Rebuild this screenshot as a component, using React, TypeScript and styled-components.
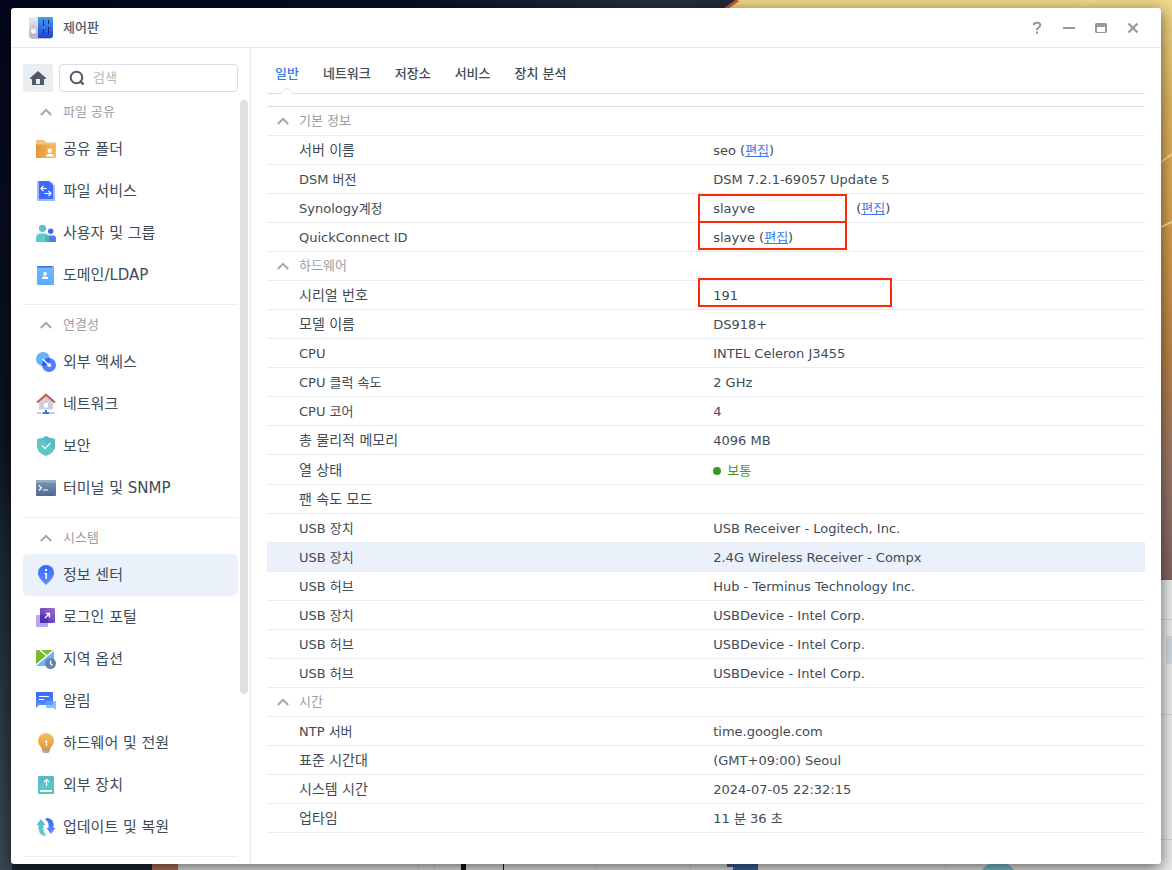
import React, { ReactNode } from 'react';
import styled, { createGlobalStyle, css } from 'styled-components';

const color = {
  text: '#414b55',
  title: '#505a64',
  muted: '#96a0aa',
  heading: '#9b9ea3',
  line: '#e9edf2',
  lineStrong: '#d9dee9',
  frame: '#e4e8f0',
  link: '#3677ea',
  selected: '#ebf1fb',
  mark: '#fa2c0a',
  ok: '#3c9b1e',
};

const GlobalStyle = createGlobalStyle`
  *, *::before, *::after { box-sizing: border-box; }
  body {
    margin: 0;
    color: ${color.text};
    font-family: Verdana, 'DejaVu Sans', 'Noto Sans CJK KR', sans-serif;
    font-size: 13px;
    line-height: 20px;
  }
  button, input { font: inherit; color: inherit; }
  button { padding: 0; border: 0; background: none; cursor: pointer; }
`;

/* ---------- Desktop ---------- */

const Desktop = styled.div`
  position: relative;
  display: flex;
  min-height: 100vh;
  padding: 8px 11px 6px;
  overflow: hidden;
`;

const WallpaperArt = styled.svg`
  position: absolute;
  inset: 0;
  width: 100%;
  height: 100%;
`;

function Wallpaper() {
  return (
    <WallpaperArt viewBox="0 0 1172 870" preserveAspectRatio="none" aria-hidden="true">
      <defs>
        <linearGradient id="night" x1="0" y1="0" x2="1" y2="0">
          <stop offset="0" stopColor="#03071c" />
          <stop offset="0.35" stopColor="#080d22" />
          <stop offset="0.55" stopColor="#272d3b" />
          <stop offset="1" stopColor="#1b2130" />
        </linearGradient>
        <linearGradient id="edge" x1="0" y1="0" x2="0" y2="1">
          <stop offset="0" stopColor="#03071c" />
          <stop offset="0.5" stopColor="#0c1322" />
          <stop offset="0.65" stopColor="#1d2836" />
          <stop offset="1" stopColor="#3a4855" />
        </linearGradient>
        <linearGradient id="gold" x1="0" y1="0" x2="0" y2="1">
          <stop offset="0" stopColor="#efd88a" />
          <stop offset="0.18" stopColor="#dfb660" />
          <stop offset="0.42" stopColor="#d39a4c" />
          <stop offset="0.62" stopColor="#b98248" />
          <stop offset="0.8" stopColor="#9b7767" />
          <stop offset="1" stopColor="#806462" />
        </linearGradient>
      </defs>
      <rect width="1172" height="870" fill="url(#night)" />
      <rect width="14" height="870" fill="url(#edge)" />
      <path d="M738 0H1172V580H1140L724 10Z" fill="url(#gold)" />
      <path d="M738 0L724 10" stroke="#c65a35" strokeWidth="3" />
      <path d="M1070 10L1096 0M1150 170L1172 154M1150 232L1172 222" stroke="#f3dd92" strokeWidth="2" />
      <path d="M12 850H152L160 870H12Z" fill="#1c2733" />
      <path d="M152 850H178V870H152Z" fill="#b8755f" />
      <path d="M178 850H1150V580H1172V870H178Z" fill="#ececec" />
      <path d="M1150 619.500H1172M1150 714.500H1172M1150 839.500H1172" stroke="#d2d3d5" />
      <path d="M418.500 860V870M434.500 860V870M596.500 860V870M690.500 860V870M945.500 860V870" stroke="#dcdcdc" />
      <rect x="1166" y="636" width="12" height="28" rx="3" fill="#d3dbe0" />
      <path d="M461 860H466V870H461ZM503 860H504V870H503Z" fill="#111" />
      <path d="M727 860H758V870H733V867H727Z" fill="#41669a" />
      <circle cx="998" cy="882" r="20" fill="#7dc9d4" />
    </WallpaperArt>
  );
}

/* ---------- Window frame ---------- */

const Window = styled.main`
  position: relative;
  display: flex;
  flex: 1;
  flex-direction: column;
  min-width: 0;
  border-radius: 3px;
  background: #fff;
  box-shadow: 0 4px 16px rgba(0, 0, 0, 0.6);
`;

const TitleBar = styled.header`
  display: flex;
  align-items: center;
  height: 40px;
  padding: 0 12px 0 18px;
  border-bottom: 1px solid ${color.frame};
`;

const Title = styled.h1`
  flex: 1;
  margin: 0 0 0 10px;
  color: ${color.title};
  font-size: 13px;
  font-weight: 500;
`;

const WindowButton = styled.button`
  display: grid;
  place-items: center;
  width: 32px;
  height: 32px;
  color: #939aa1;
`;

const Body = styled.div`
  display: flex;
  flex: 1;
`;

/* ---------- Sidebar ---------- */

const Sidebar = styled.aside`
  display: flex;
  flex: none;
  flex-direction: column;
  width: 240px;
  padding: 16px 2px 0 12px;
  border-right: 1px solid ${color.frame};
`;

const SearchRow = styled.div`
  display: flex;
  gap: 6px;
  padding-right: 10px;
`;

const HomeButton = styled.button`
  display: grid;
  flex: none;
  place-items: center;
  width: 30px;
  height: 28px;
  border-radius: 3px;
  background: #e9eef3;
`;

const SearchField = styled.label`
  display: flex;
  flex: 1;
  align-items: center;
  gap: 8px;
  min-width: 0;
  height: 28px;
  padding: 0 9px;
  border: 1px solid ${color.lineStrong};
  border-radius: 4px;

  svg { flex: none; }
`;

const SearchInput = styled.input`
  flex: 1;
  width: 0;
  min-width: 0;
  padding: 0;
  border: 0;
  outline: 0;
  background: none;
  &::placeholder { color: #b4b8bd; opacity: 1; }
`;

const SidebarScroll = styled.div`
  display: flex;
  flex: 1;
  gap: 2px;
`;

const Nav = styled.nav`
  flex: 1;
  min-width: 0;
`;

const NavGroup = styled.section`
  padding-bottom: 8px;
  border-bottom: 1px solid ${color.line};
`;

const NavHeading = styled.button`
  display: flex;
  align-items: center;
  gap: 11px;
  width: 100%;
  height: 36px;
  padding-top: 3px;
  padding-left: 17px;
  color: ${color.heading};
`;

const NavItem = styled.a<{ $selected?: boolean }>`
  display: flex;
  align-items: center;
  gap: 7px;
  height: 42px;
  padding-left: 13px;
  border-radius: 5px;
  color: ${color.text};
  font-size: 15px;
  text-decoration: none;
  ${(p) => p.$selected && css`background: ${color.selected};`}
`;

const ScrollThumb = styled.div`
  width: 8px;
  height: 77%;
  margin-top: 8px;
  border-radius: 4px;
  background: #e0e0e0;
`;

/* ---------- Content ---------- */

const Content = styled.section`
  flex: 1;
  min-width: 0;
  padding: 0 16px;
`;

const Tabs = styled.div`
  display: flex;
  gap: 24px;
  height: 46px;
  padding-left: 8px;
  border-bottom: 1px solid ${color.lineStrong};
`;

const Tab = styled.button<{ $active?: boolean }>`
  position: relative;
  height: 46px;
  padding-bottom: 4px;
  padding-top: 10px;
  font-weight: 500;
  ${(p) => p.$active && css`color: ${color.link};`}
`;

const TabCaret = styled.svg`
  position: absolute;
  bottom: 0;
  left: calc(50% - 6px);
`;

const InfoTable = styled.table`
  width: 100%;
  margin-top: 12px;
  border-top: 1px solid ${color.lineStrong};
  border-spacing: 0;
  table-layout: fixed;
`;

const LabelColumn = styled.col`
  width: 49%;
`;

const GroupCell = styled.th`
  height: 29px;
  padding: 0;
  border-bottom: 1px solid ${color.line};
  color: ${color.heading};
  font-weight: 400;
`;

const GroupButton = styled.button`
  display: flex;
  align-items: center;
  gap: 10px;
  padding-left: 10px;
`;

const cell = css`
  height: 29px;
  padding-top: 2px;
  padding-bottom: 0;
  border-bottom: 1px solid ${color.line};
  text-align: left;
  font-weight: 400;
`;

const LabelCell = styled.th<{ $hangul: boolean }>`
  ${cell}
  padding-left: 32px;
  ${(p) => p.$hangul && css`
    padding-top: 0;
    font-size: 14px;
  `}
`;

const ValueCell = styled.td`
  ${cell}
  position: relative;
  padding-left: 16px;
`;

const Row = styled.tr<{ $selected?: boolean }>`
  ${(p) => p.$selected && css`background: ${color.selected};`}
`;

const EditLink = styled.a`
  color: ${color.link};
  text-decoration: underline;
`;

const Account = styled.span`
  display: inline-block;
  width: 143px;
`;

const Status = styled.span`
  display: flex;
  align-items: center;
  gap: 6px;
  height: 27px;
  color: ${color.ok};
  &::before {
    content: '';
    width: 8px;
    height: 8px;
    border-radius: 50%;
    background: ${color.ok};
  }
`;

const Mark = styled.span<{ $width: number; $top: number }>`
  position: absolute;
  top: ${(p) => p.$top}px;
  left: 1px;
  width: ${(p) => p.$width}px;
  height: 29px;
  border: 2px solid ${color.mark};
  pointer-events: none;
`;

/* ---------- Icons ---------- */

const Chevron = () => (
  <svg width="12" height="8" viewBox="0 0 12 8" fill="none" stroke="#a3a8ae" strokeWidth="2" aria-hidden="true">
    <path d="M.8 7L6 1.800L11.200 7" />
  </svg>
);

const Icon20 = ({ children }: { children: ReactNode }) => (
  <svg width="20" height="20" viewBox="0 0 20 20" overflow="visible" aria-hidden="true">{children}</svg>
);

const GradientDefs = styled.svg`
  position: absolute;
`;

const IconGradients = () => (
  <GradientDefs width="0" height="0" aria-hidden="true">
    <defs>
      <linearGradient id="orange" x1="0" y1="0" x2="1" y2="0"><stop stopColor="#e8963a" /><stop offset="1" stopColor="#f3be55" /></linearGradient>
      <linearGradient id="blue" x1="0" y1="0" x2="0" y2="1"><stop stopColor="#3467fb" /><stop offset="1" stopColor="#6590fd" /></linearGradient>
      <linearGradient id="sky" x1="0" y1="0" x2="0" y2="1"><stop stopColor="#76b6fb" /><stop offset="1" stopColor="#5aabff" /></linearGradient>
      <linearGradient id="teal" x1="0" y1="0" x2="0" y2="1"><stop stopColor="#55b7cd" /><stop offset="1" stopColor="#67cdc3" /></linearGradient>
      <linearGradient id="steel" x1="0" y1="0" x2="0" y2="1"><stop stopColor="#8097b8" /><stop offset="1" stopColor="#4d6b96" /></linearGradient>
      <linearGradient id="violet" x1="1" y1="0" x2="0" y2="1"><stop stopColor="#a66bd4" /><stop offset="1" stopColor="#4330ab" /></linearGradient>
      <linearGradient id="bulb" x1="0" y1="0" x2="0" y2="1"><stop stopColor="#f0c369" /><stop offset="1" stopColor="#e8932e" /></linearGradient>
      <linearGradient id="panelBlue" x1="0" y1="0" x2="0" y2="1"><stop stopColor="#44a0ea" /><stop offset="1" stopColor="#2740d6" /></linearGradient>
      <linearGradient id="panelGray" x1="0" y1="0" x2="0" y2="1"><stop stopColor="#e9eafa" /><stop offset="1" stopColor="#b4b4c8" /></linearGradient>
    </defs>
  </GradientDefs>
);

const ControlPanelIcon = () => (
  <svg width="24" height="24" viewBox="0 0 24 24" aria-hidden="true">
    <path d="M2 21H22V23H2Z" fill="#c3c3cc" />
    <path d="M1 1H9V22H2Q0 22 0 20V2Q0 1 1 1Z" fill="url(#panelGray)" />
    <path d="M9 1H23Q24 1 24 2V20Q24 22 22 22H9Z" fill="url(#panelBlue)" />
    <circle cx="4.500" cy="15.800" r="3" fill="#9b9fb4" />
    <circle cx="4.500" cy="15.200" r="2.700" fill="#f1f2fa" />
    <circle cx="4.500" cy="10" r=".6" fill="#6d7084" />
    <path d="M14.500 4V18M19.500 4V18" stroke="#122a6b" />
    <circle cx="14.500" cy="11.500" r="1.600" fill="#3c83ee" />
    <circle cx="19.500" cy="9.500" r="1.600" fill="#3c83ee" />
  </svg>
);

const icons = {
  folder: (
    <Icon20>
      <path d="M0 7V2Q0 1 1 1H8L10 3.500H19Q20 3.500 20 4.500V7Z" fill="#f2c083" />
      <path d="M0 5.500H20V18Q20 19 19 19H1Q0 19 0 18Z" fill="url(#orange)" />
      <circle cx="13.700" cy="11.700" r="2.200" fill="#fff" />
      <path d="M10 17.500V16.500Q10 15 12 15H15.500Q17.500 15 17.500 16.500V17.500Z" fill="#fff" />
    </Icon20>
  ),
  fileService: (
    <Icon20>
      <path d="M1 0H13L19 5V20H2Q1 20 1 19Z" fill="#a0b5fc" />
      <path d="M3 0H13L17 4V18H3Z" fill="#3b6bfa" />
      <path d="M13 0L17 4V2Z" fill="#84a2fc" />
      <path d="M10.500 7.500H5M7.500 5L5 7.500L7.500 10M8.500 12.500H15M12.500 10L15 12.500L12.500 15" fill="none" stroke="#fff" strokeWidth="1.200" />
    </Icon20>
  ),
  users: (
    <Icon20>
      <circle cx="14.700" cy="8.300" r="2.700" fill="#3c6dfa" />
      <path d="M11 19V14Q11 12.500 13 12.500H17Q20 12.500 20 15.500V19Z" fill="#4d7bfb" />
      <circle cx="6.500" cy="5.300" r="3.600" fill="#62c1c9" />
      <path d="M0 19V15Q0 10.500 4.500 10.500H8.500Q13 10.500 13 15V19Z" fill="#62c9c6" />
      <path d="M9 19V15Q9 13 13 13V19Z" fill="#4bb1b6" />
    </Icon20>
  ),
  domain: (
    <Icon20>
      <rect x="1" y="1" width="16" height="4" rx="1" fill="#3b6bfa" />
      <path d="M16 1H18V19Q18 20 17 20H2Q1 20 1 19V2.500H16Z" fill="url(#sky)" />
      <circle cx="9" cy="8.800" r="1.900" fill="#fff" />
      <path d="M6 14V13Q6 11.500 8 11.500H10Q12 11.500 12 13V14Z" fill="#fff" />
    </Icon20>
  ),
  external: (
    <Icon20>
      <circle cx="7" cy="7" r="7" fill="#65b1fb" />
      <circle cx="13" cy="13" r="7" fill="#547ffc" />
      <path d="M13.900 6.100A7 7 0 0 0 6.100 13.900A7 7 0 0 0 13.900 6.100Z" fill="#2e62f0" />
      <path d="M6.500 7L13 13" stroke="#fff" strokeWidth="1.300" />
      <circle cx="13.200" cy="13.200" r="1.900" fill="#fff" />
    </Icon20>
  ),
  network: (
    <Icon20>
      <path d="M3 7L10 1L17 7V15.500H3Z" fill="#cfd0d6" />
      <path d="M1 8.500L10 .8L19 8.500" fill="none" stroke="#c8574a" strokeWidth="1.900" />
      <rect x="8" y="9" width="4" height="4.500" rx="1" fill="#fff" />
      <path d="M1 19H19" stroke="#cdd0d8" strokeWidth="2" />
      <path d="M9 16H11V18H13V20H7V18H9Z" fill="#3b6bfa" />
    </Icon20>
  ),
  security: (
    <Icon20>
      <path d="M10 0Q14 3 19 3V10Q19 17 10 20Q1 17 1 10V3Q6 3 10 0Z" fill="#5ec6c4" />
      <path d="M10 0Q14 3 19 3V10Q19 12 18 14L7 3Z" fill="#59b8c5" />
      <path d="M6 9.500L9 12.500L14.500 7" fill="none" stroke="#fff" strokeWidth="1.300" />
    </Icon20>
  ),
  terminal: (
    <Icon20>
      <rect y="2" width="20" height="16" rx="1" fill="url(#steel)" />
      <rect y="2" width="20" height="2.500" fill="#9aabc5" />
      <path d="M3 7.500L5.500 10L3 12.500M7 12H12" fill="none" stroke="#fff" strokeWidth="1.200" />
    </Icon20>
  ),
  info: (
    <Icon20>
      <path d="M10 0A8 8 0 0 1 18 8Q18 12 13.500 16.500L10 20L6.500 16.500Q2 12 2 8A8 8 0 0 1 10 0Z" fill="url(#blue)" />
      <rect x="9" y="4" width="2" height="2" fill="#fff" />
      <path d="M8.500 8H11V14H9.500V9.200H8.500Z" fill="#fff" />
    </Icon20>
  ),
  portal: (
    <Icon20>
      <rect y="8" width="12" height="12" rx="1" fill="#baa5ee" />
      <rect x="4" y="1" width="15" height="15" rx="1" fill="url(#violet)" />
      <path d="M4 8H12V16H5Q4 16 4 15Z" fill="#4a2fa6" opacity=".6" />
      <path d="M9 11L14 6M10 6.500H13.500V10.500" fill="none" stroke="#fff" strokeWidth="1.300" />
    </Icon20>
  ),
  region: (
    <Icon20>
      <rect y="1" width="18" height="16" rx="1" fill="#6bb5fb" />
      <path d="M1 1H17L1 16L0 17V2Z" fill="#7cbc2c" />
      <path d="M0 16L18 1M4 1L11 7" fill="none" stroke="#fff" strokeWidth="1.500" />
      <circle cx="14.500" cy="14.500" r="5.500" fill="#6482b0" />
      <path d="M14.500 11.500V14.500L16.500 16.500" fill="none" stroke="#fff" strokeWidth="1.400" />
    </Icon20>
  ),
  notice: (
    <Icon20>
      <path d="M1 1H16Q17 1 17 2V14H3L0 17V2Q0 1 1 1Z" fill="url(#blue)" />
      <path d="M3 5.500H13M3 8.500H8" stroke="#fff" strokeWidth="1.200" />
      <path d="M10 10H19Q20 10 20 11V19L17.500 17H10Z" fill="#86bffc" />
      <path d="M10 10H17V14H10Z" fill="#5a9dfb" />
    </Icon20>
  ),
  power: (
    <Icon20>
      <path d="M10 0A8 8 0 0 1 18 8Q18 11 15.500 13.500Q14 15 14 17H6Q6 15 4.500 13.500Q2 11 2 8A8 8 0 0 1 10 0Z" fill="url(#bulb)" />
      <path d="M6 17H14V18.500H13L12.500 20H7.500L7 18.500H6Z" fill="#a2a8b5" />
      <path d="M9 8.500L10.500 8.200V13" fill="none" stroke="#fff" strokeWidth="1.300" />
    </Icon20>
  ),
  device: (
    <Icon20>
      <rect x="2" y="1" width="16" height="18" rx="1" fill="url(#teal)" />
      <path d="M2 13H18V18Q18 19 17 19H3Q2 19 2 18Z" fill="#57c4bd" />
      <path d="M10.500 11V4.500M8 7L10.500 4.500L13 7" fill="none" stroke="#fff" strokeWidth="1.200" />
      <path d="M4 16H16" stroke="#fff" strokeWidth="1.800" />
    </Icon20>
  ),
  update: (
    <Icon20>
      <path d="M5 2L9.500 8H7.500Q6.500 14 10 18L9 19Q1.500 18 2.500 8H.500Z" fill="url(#teal)" />
      <path d="M15 17L10.500 11H12.500Q13.500 5 9 2L11 1Q18.500 1 17.500 11H19.500Z" fill="url(#blue)" />
    </Icon20>
  ),
};

/* ---------- Data ---------- */

type NavEntry = { label: string; icon: keyof typeof icons };

const navGroups: { title: string; items: NavEntry[] }[] = [
  {
    title: '파일 공유',
    items: [
      { label: '공유 폴더', icon: 'folder' },
      { label: '파일 서비스', icon: 'fileService' },
      { label: '사용자 및 그룹', icon: 'users' },
      { label: '도메인/LDAP', icon: 'domain' },
    ],
  },
  {
    title: '연결성',
    items: [
      { label: '외부 액세스', icon: 'external' },
      { label: '네트워크', icon: 'network' },
      { label: '보안', icon: 'security' },
      { label: '터미널 및 SNMP', icon: 'terminal' },
    ],
  },
  {
    title: '시스템',
    items: [
      { label: '정보 센터', icon: 'info' },
      { label: '로그인 포털', icon: 'portal' },
      { label: '지역 옵션', icon: 'region' },
      { label: '알림', icon: 'notice' },
      { label: '하드웨어 및 전원', icon: 'power' },
      { label: '외부 장치', icon: 'device' },
      { label: '업데이트 및 복원', icon: 'update' },
    ],
  },
];

const tabs = ['일반', '네트워크', '저장소', '서비스', '장치 분석'];

const Edit = () => (
  <>(<EditLink href="#edit">편집</EditLink>)</>
);

type InfoRow = { label: string; value?: ReactNode; selected?: boolean };

const infoGroups: { title: string; rows: InfoRow[] }[] = [
  {
    title: '기본 정보',
    rows: [
      { label: '서버 이름', value: <>seo <Edit /></> },
      { label: 'DSM 버전', value: 'DSM 7.2.1-69057 Update 5' },
      { label: 'Synology계정', value: <><Account>slayve</Account><Edit /><Mark $width={149} $top={0} /></> },
      { label: 'QuickConnect ID', value: <>slayve <Edit /><Mark $width={149} $top={-2} /></> },
    ],
  },
  {
    title: '하드웨어',
    rows: [
      { label: '시리얼 번호', value: <>191<Mark $width={194} $top={-3} /></> },
      { label: '모델 이름', value: 'DS918+' },
      { label: 'CPU', value: 'INTEL Celeron J3455' },
      { label: 'CPU 클럭 속도', value: '2 GHz' },
      { label: 'CPU 코어', value: '4' },
      { label: '총 물리적 메모리', value: '4096 MB' },
      { label: '열 상태', value: <Status>보통</Status> },
      { label: '팬 속도 모드' },
      { label: 'USB 장치', value: 'USB Receiver - Logitech, Inc.' },
      { label: 'USB 장치', value: '2.4G Wireless Receiver - Compx', selected: true },
      { label: 'USB 허브', value: 'Hub - Terminus Technology Inc.' },
      { label: 'USB 장치', value: 'USBDevice - Intel Corp.' },
      { label: 'USB 허브', value: 'USBDevice - Intel Corp.' },
      { label: 'USB 허브', value: 'USBDevice - Intel Corp.' },
    ],
  },
  {
    title: '시간',
    rows: [
      { label: 'NTP 서버', value: 'time.google.com' },
      { label: '표준 시간대', value: '(GMT+09:00) Seoul' },
      { label: '시스템 시간', value: '2024-07-05 22:32:15' },
      { label: '업타임', value: '11 분 36 초' },
    ],
  },
];

/* ---------- Page ---------- */

function WindowControls() {
  return (
    <>
      <WindowButton aria-label="도움말">
        <svg width="12" height="14" viewBox="0 0 12 14" fill="none" stroke="currentColor" strokeWidth="2">
          <path d="M2.700 4.200Q2.700 1.800 6 1.800Q9.300 1.800 9.300 4.200Q9.300 5.500 7.500 6.600Q6 7.500 6 9.200M6 10.500V12.700" />
        </svg>
      </WindowButton>
      <WindowButton aria-label="최소화">
        <svg width="12" height="12" viewBox="0 0 12 12"><path d="M0 5H12V7H0Z" fill="currentColor" /></svg>
      </WindowButton>
      <WindowButton aria-label="최대화">
        <svg width="12" height="10" viewBox="0 0 12 10"><path fillRule="evenodd" d="M1 0H11L12 1V9L11 10H1L0 9V1ZM2 4V9H10V4Z" fill="currentColor" /></svg>
      </WindowButton>
      <WindowButton aria-label="닫기">
        <svg width="12" height="12" viewBox="0 0 12 12"><path d="M1.500 1.500L10.500 10.500M10.500 1.500L1.500 10.500" stroke="currentColor" strokeWidth="2.200" /></svg>
      </WindowButton>
    </>
  );
}

export default function App() {
  return (
    <Desktop>
      <GlobalStyle />
      <Wallpaper />
      <IconGradients />
      <Window>
        <TitleBar>
          <ControlPanelIcon />
          <Title>제어판</Title>
          <WindowControls />
        </TitleBar>
        <Body>
          <Sidebar>
            <SearchRow>
              <HomeButton aria-label="홈">
                <svg width="16" height="14" viewBox="0 0 16 14" aria-hidden="true">
                  <path fillRule="evenodd" d="M8 0L16 7V8H14V14H2V8H0V7ZM6 8V13H10V8Z" fill="#505965" />
                </svg>
              </HomeButton>
              <SearchField>
                <svg width="16" height="16" viewBox="0 0 16 16" fill="none" stroke="#505965" strokeWidth="2" aria-hidden="true">
                  <circle cx="7.500" cy="7.500" r="5.800" />
                  <path d="M11 11L14.500 14.500" strokeWidth="2.400" />
                </svg>
                <SearchInput type="search" placeholder="검색" aria-label="검색" />
              </SearchField>
            </SearchRow>
            <SidebarScroll>
              <Nav aria-label="제어판">
                {navGroups.map((group) => (
                  <NavGroup key={group.title}>
                    <NavHeading aria-expanded="true"><Chevron />{group.title}</NavHeading>
                    {group.items.map((item) => (
                      <NavItem key={item.label} href="#" $selected={item.icon === 'info'}>
                        {icons[item.icon]}
                        {item.label}
                      </NavItem>
                    ))}
                  </NavGroup>
                ))}
              </Nav>
              <ScrollThumb />
            </SidebarScroll>
          </Sidebar>
          <Content>
            <Tabs role="tablist">
              {tabs.map((tab, i) => (
                <Tab key={tab} role="tab" aria-selected={i === 0} $active={i === 0}>
                  {tab}
                  {i === 0 && (
                    <TabCaret width="12" height="7" viewBox="0 0 12 7" aria-hidden="true">
                      <path d="M0 7V6L6 0L12 6V7Z" fill="#fff" />
                      <path d="M0 6.500L6 .7L12 6.500" fill="none" stroke={color.lineStrong} />
                    </TabCaret>
                  )}
                </Tab>
              ))}
            </Tabs>
            <InfoTable>
              <colgroup>
                <LabelColumn />
                <col />
              </colgroup>
              {infoGroups.map((group) => (
                <tbody key={group.title}>
                  <tr>
                    <GroupCell colSpan={2} scope="rowgroup">
                      <GroupButton aria-expanded="true"><Chevron />{group.title}</GroupButton>
                    </GroupCell>
                  </tr>
                  {group.rows.map((row, i) => (
                    <Row key={i} $selected={row.selected}>
                      <LabelCell scope="row" $hangul={!/[A-Za-z]/.test(row.label)}>{row.label}</LabelCell>
                      <ValueCell>{row.value}</ValueCell>
                    </Row>
                  ))}
                </tbody>
              ))}
            </InfoTable>
          </Content>
        </Body>
      </Window>
    </Desktop>
  );
}
